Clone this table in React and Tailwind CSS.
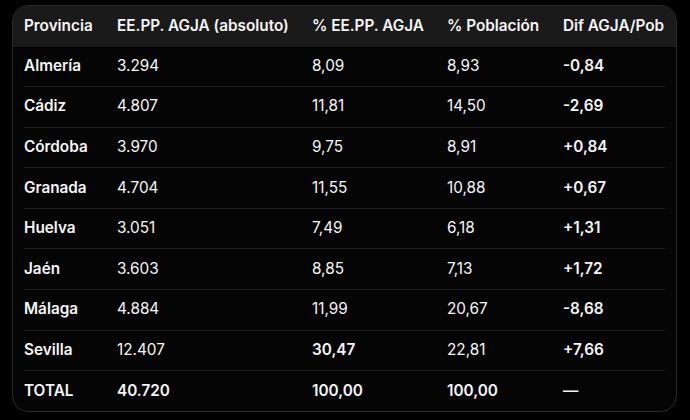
import React from 'react';

const rows = [
  { prov: "Almería", abs: "3.294", pct: "8,09", pob: "8,93", dif: "-0,84" },
  { prov: "Cádiz", abs: "4.807", pct: "11,81", pob: "14,50", dif: "-2,69" },
  { prov: "Córdoba", abs: "3.970", pct: "9,75", pob: "8,91", dif: "+0,84" },
  { prov: "Granada", abs: "4.704", pct: "11,55", pob: "10,88", dif: "+0,67" },
  { prov: "Huelva", abs: "3.051", pct: "7,49", pob: "6,18", dif: "+1,31" },
  { prov: "Jaén", abs: "3.603", pct: "8,85", pob: "7,13", dif: "+1,72" },
  { prov: "Málaga", abs: "4.884", pct: "11,99", pob: "20,67", dif: "-8,68" },
  { prov: "Sevilla", abs: "12.407", pct: "30,47", pob: "22,81", dif: "+7,66", boldPct: true },
  { prov: "TOTAL", abs: "40.720", pct: "100,00", pob: "100,00", dif: "—", total: true },
];

const cols = "grid grid-cols-[93px_195px_135px_116px_102px] items-center";

const App = () => {
  return (
    <div className="w-[690px] h-[420px] bg-black pt-[5px] pl-[12px]" style={{ fontFamily: "Inter, 'Noto Sans', sans-serif" }}>
      <div className="w-[665px] h-[407px] border border-[#2a2a2a] rounded-[16px] overflow-hidden bg-[#050505] text-[15.3px] text-[#f5f5f5]">
        <div className="bg-[#1a1a1a] h-[40.5px] px-[11px]">
          <div className={`${cols} h-full font-semibold`}>
            <div>Provincia</div>
            <div>EE.PP. AGJA (absoluto)</div>
            <div>% EE.PP. AGJA</div>
            <div>% Población</div>
            <div>Dif AGJA/Pob</div>
          </div>
        </div>
        <div className="px-[11px]">
          {rows.map((r, i) => (
            <div
              key={r.prov}
              className={`${cols} h-[40.6px] ${i < rows.length - 1 ? "border-b border-[#1f1f1f]" : ""} ${r.total ? "font-semibold" : ""}`}
            >
              <div className="font-semibold">{r.prov}</div>
              <div>{r.abs}</div>
              <div className={r.boldPct ? "font-semibold" : ""}>{r.pct}</div>
              <div>{r.pob}</div>
              <div className="font-semibold">{r.dif}</div>
            </div>
          ))}
        </div>
      </div>
    </div>
  );
};

export default App;
